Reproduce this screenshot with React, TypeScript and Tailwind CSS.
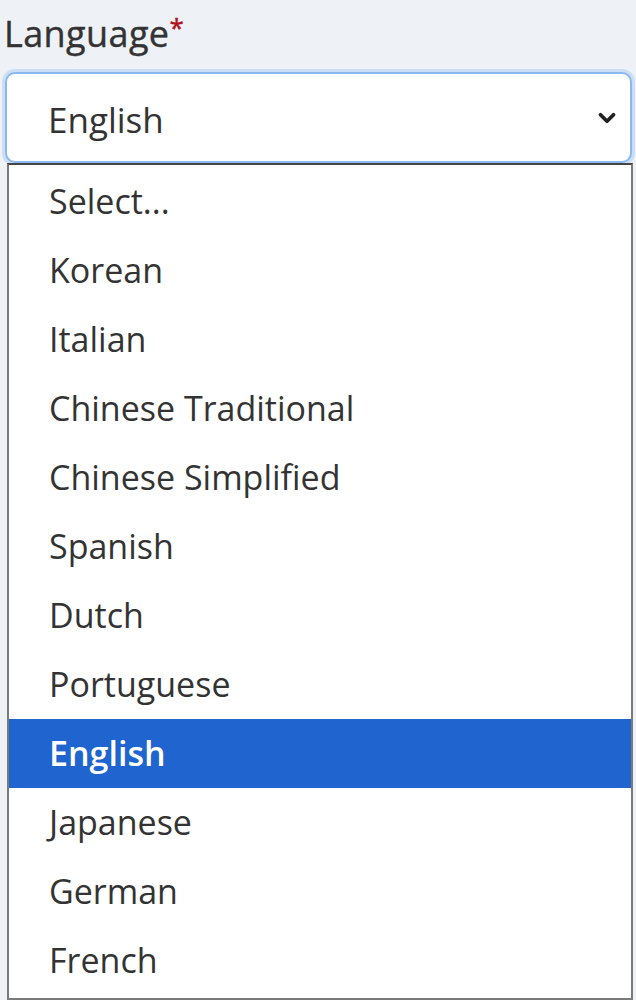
import { ChevronDown } from 'lucide-react'

const options = [
  'Select...',
  'Korean',
  'Italian',
  'Chinese Traditional',
  'Chinese Simplified',
  'Spanish',
  'Dutch',
  'Portuguese',
  'English',
  'Japanese',
  'German',
  'French',
]

export default function App() {
  return (
    <div className="w-[636px] h-[1000px] bg-[#eef1f6] overflow-hidden text-[#2b2b2b]" style={{ fontFamily: '"Open Sans", "Noto Sans", sans-serif' }}>
      {/* Label */}
      <div className="pl-[4px] pt-[4px] h-[72px] text-[36px] leading-[46px] text-[#333] tracking-[0.4px] [-webkit-text-stroke:0.4px_#333]">
        Language<span className="text-[#b0121a] text-[26px] align-[10px] [-webkit-text-stroke:0.4px_#b0121a]">*</span>
      </div>

      {/* Select box */}
      <div className="ml-[5px] mr-[4px] h-[91px] rounded-[10px] border-2 border-[#8bb8f0] bg-white shadow-[0_0_0_3px_rgba(160,200,245,0.45)] flex items-center justify-between pl-[41px] pr-[10px]">
        <span className="text-[35px] text-[#333] pt-[5px]">English</span>
        <ChevronDown size={26} strokeWidth={3.5} className="text-[#222]" />
      </div>

      {/* Open list */}
      <div className="ml-[7px] mr-[3px] border-2 border-[#7a7a7a] border-t-[#444] bg-white pt-[2px] pb-[3px]">
        {options.map((o) => (
          <div
            key={o}
            className={
              o === 'English'
                ? 'h-[69px] flex items-center pl-[40px] bg-[#1f64cf] text-white text-[34px] font-semibold'
                : 'h-[69px] flex items-center pl-[40px] text-[34px] text-[#333]'
            }
          >
            {o}
          </div>
        ))}
      </div>
    </div>
  )
}
